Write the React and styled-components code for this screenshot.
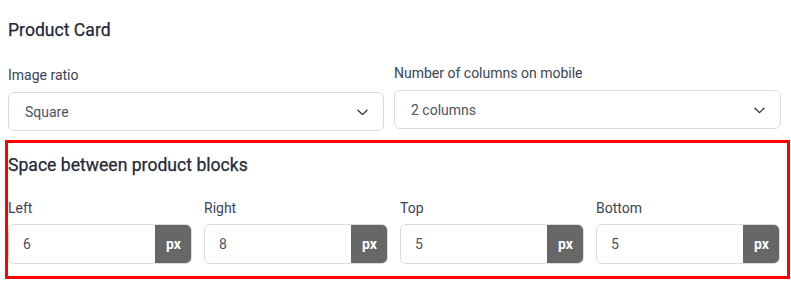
import React from 'react'
import styled, { createGlobalStyle } from 'styled-components'

const GlobalStyle = createGlobalStyle`
    body {
        margin: 0;
        background: #fff;
        font-family: Roboto, "Liberation Sans", sans-serif;
    }
`;

const Page = styled.div`
    padding: 18px 0 0 8px;
    width: 783px;
`;

const Heading = styled.h2`
    margin: 0;
    font-size: 17.6px;
    line-height: 24px;
    font-weight: 400;
    color: #1f2a37;
    -webkit-text-stroke: 0.25px #1f2a37;
`;

const SelectGrid = styled.div`
    display: grid;
    grid-template-columns: 376px 387px;
    column-gap: 10px;
    margin-top: 21px;
`;

const Field = styled.div`
    display: flex;
    flex-direction: column;
    margin-top: ${props => props.$offset || 0}px;
`;

const Label = styled.label`
    font-size: 14px;
    line-height: 20px;
    color: #3b4452;
    margin-bottom: ${props => props.$gap}px;
`;

const SelectBox = styled.div`
    display: flex;
    align-items: center;
    justify-content: space-between;
    height: 39px;
    box-sizing: border-box;
    padding: 0 15px 0 16px;
    border: 1px solid #dcdcdc;
    border-radius: 6px;
    font-size: 14px;
    color: #4a5361;
`;

const Chevron = styled.svg`
    width: 11px;
    height: 7px;
    margin-top: 2px;
`;

const Spacing = styled.section`
    margin: 9px 0 0 -3px;
    width: 785px;
    box-sizing: border-box;
    border: 3px solid #ff0000;
    padding: 10px 7px 12px 0;
`;

const InputGrid = styled.div`
    display: grid;
    grid-template-columns: repeat(4, 184px);
    column-gap: 12px;
    margin-top: 21px;
`;

const InputGroup = styled.div`
    display: flex;
    height: 40px;
    box-sizing: border-box;
    border: 1px solid #dcdcdc;
    border-radius: 6px;
    overflow: hidden;
`;

const Value = styled.div`
    flex: 1;
    display: flex;
    align-items: center;
    padding-left: 14px;
    font-size: 14px;
    color: #4a5361;
`;

const Unit = styled.div`
    width: 37px;
    display: flex;
    align-items: center;
    justify-content: center;
    background: #676767;
    color: #fff;
    font-size: 14px;
    font-weight: 700;
    margin: -1px -1px -1px 0;
`;

const ChevronIcon = () => (
    <Chevron viewBox="0 0 11 7">
        <path d="M1 1.2 L5.5 5.6 L10 1.2" fill="none" stroke="#2b2f36" strokeWidth="1.3" strokeLinecap="round" strokeLinejoin="round" />
    </Chevron>
);

const spacing = [
    { label: 'Left', value: '6' },
    { label: 'Right', value: '8' },
    { label: 'Top', value: '5' },
    { label: 'Bottom', value: '5' },
];

export default function App() {
    return (
        <Page>
            <GlobalStyle />
            <Heading>Product Card</Heading>
            <SelectGrid>
                <Field $offset={2}>
                    <Label $gap={7}>Image ratio</Label>
                    <SelectBox>
                        Square
                        <ChevronIcon />
                    </SelectBox>
                </Field>
                <Field>
                    <Label $gap={7}>Number of columns on mobile</Label>
                    <SelectBox>
                        2 columns
                        <ChevronIcon />
                    </SelectBox>
                </Field>
            </SelectGrid>
            <Spacing>
                <Heading>Space between product blocks</Heading>
                <InputGrid>
                    {spacing.map(item => (
                        <Field key={item.label}>
                            <Label $gap={6}>{item.label}</Label>
                            <InputGroup>
                                <Value>{item.value}</Value>
                                <Unit>px</Unit>
                            </InputGroup>
                        </Field>
                    ))}
                </InputGrid>
            </Spacing>
        </Page>
    )
}
